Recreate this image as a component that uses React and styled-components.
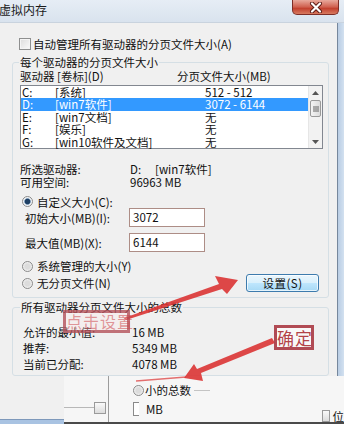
import React from 'react'
import styled, { createGlobalStyle } from 'styled-components'

const GlobalStyle = createGlobalStyle`
  html, body {
    margin: 0;
    padding: 0;
    background: #f0f0f0;
  }
  body {
    font-family: "Noto Sans CJK SC", "Liberation Sans", sans-serif;
    font-size: 11.5px;
    color: #111;
  }
`

const drives = [
    { letter: 'C:', label: '[系统]', size: '512 - 512' },
    { letter: 'D:', label: '[win7软件]', size: '3072 - 6144', selected: true },
    { letter: 'E:', label: '[win7文档]', size: '无' },
    { letter: 'F:', label: '[娱乐]', size: '无' },
    { letter: 'G:', label: '[win10软件及文档]', size: '无' },
]

const totals = [
    ['允许的最小值:', '16 MB'],
    ['推荐:', '5349 MB'],
    ['当前已分配:', '4078 MB'],
]

const App = () => {
    return (
        <Window>
            <GlobalStyle />
            <TitleBar>
                <Title>虚拟内存</Title>
                <CloseButton>
                    <svg width="14" height="11" viewBox="0 0 14 11">
                        <path d="M3 1.5 L11 9.5 M11 1.5 L3 9.5" stroke="#5a1a14" strokeWidth="4" strokeLinecap="round" />
                        <path d="M3 1.5 L11 9.5 M11 1.5 L3 9.5" stroke="#fff" strokeWidth="2.2" strokeLinecap="round" />
                    </svg>
                </CloseButton>
            </TitleBar>

            <Main>
                <Content>
                    <CheckRow>
                        <CheckBox />
                        <span>自动管理所有驱动器的分页文件大小(A)</span>
                    </CheckRow>

                    <GroupBox>
                        <GroupLegend>每个驱动器的分页文件大小</GroupLegend>
                        <ListHeader>
                            <span>驱动器 [卷标](D)</span>
                            <span>分页文件大小(MB)</span>
                        </ListHeader>
                        <ListBox>
                            <ListRows>
                                {drives.map((d) => (
                                    <ListRow key={d.letter} $selected={d.selected}>
                                        <span>{d.letter}</span>
                                        <span>{d.label}</span>
                                        <span>{d.size}</span>
                                    </ListRow>
                                ))}
                            </ListRows>
                            <ScrollBar>
                                <ScrollArrow>
                                    <svg width="7" height="4" viewBox="0 0 7 4"><path d="M0 4 L3.5 0 L7 4 Z" fill="#555" /></svg>
                                </ScrollArrow>
                                <ScrollThumb>
                                    <svg width="6" height="6" viewBox="0 0 6 6">
                                        <path d="M0 1 H6 M0 3 H6 M0 5 H6" stroke="#666" strokeWidth="1" />
                                    </svg>
                                </ScrollThumb>
                                <ScrollTrack />
                                <ScrollArrow>
                                    <svg width="7" height="4" viewBox="0 0 7 4"><path d="M0 0 L3.5 4 L7 0 Z" fill="#555" /></svg>
                                </ScrollArrow>
                            </ScrollBar>
                        </ListBox>

                        <InfoGrid>
                            <span>所选驱动器:</span>
                            <span><DriveTag>D:</DriveTag>[win7软件]</span>
                            <span>可用空间:</span>
                            <span>96963 MB</span>
                        </InfoGrid>

                        <RadioRow $top={6} $height={13}>
                            <Radio $checked />
                            <span>自定义大小(C):</span>
                        </RadioRow>
                        <SizeRow $top={0}>
                            <span>初始大小(MB)(I):</span>
                            <SizeInput>3072</SizeInput>
                        </SizeRow>
                        <SizeRow $top={6}>
                            <span>最大值(MB)(X):</span>
                            <SizeInput>6144</SizeInput>
                        </SizeRow>
                        <RadioRow $top={7} $height={14}>
                            <Radio />
                            <span>系统管理的大小(Y)</span>
                        </RadioRow>
                        <ActionRow>
                            <RadioRow $top={0} $height={18}>
                                <Radio />
                                <span>无分页文件(N)</span>
                            </RadioRow>
                            <PushButton>设置(S)</PushButton>
                        </ActionRow>
                    </GroupBox>

                    <TotalsBox>
                        <GroupLegend $shift={-3}>所有驱动器分页文件大小的总数</GroupLegend>
                        <TotalsGrid>
                            {totals.map(([k, v]) => (
                                <React.Fragment key={k}>
                                    <span>{k}</span>
                                    <span>{v}</span>
                                </React.Fragment>
                            ))}
                        </TotalsGrid>
                    </TotalsBox>
                </Content>
                <RightFrame />
            </Main>

            <Footer>
                <FooterStub />
                <Fragment>
                    <FragCell>
                        <FragLine />
                        <FragBox />
                    </FragCell>
                    <FragBody>
                        <FragRow $top={7}>
                            <Radio />
                            <span>小的总数</span>
                            <FragRule />
                        </FragRow>
                        <FragRow $top={5}>
                            <FragMini />
                            <span>MB</span>
                        </FragRow>
                    </FragBody>
                    <FragCorner>
                        <FragBox />
                        <span>位</span>
                    </FragCorner>
                </Fragment>
            </Footer>

            <Marks viewBox="0 0 344 424" width="344" height="424">
                <defs>
                    <filter id="soft" x="-10%" y="-10%" width="120%" height="120%">
                        <feGaussianBlur stdDeviation="0.6" />
                    </filter>
                </defs>
                <g fill="#dc3636" filter="url(#soft)" opacity="0.9">
                    <path d="M124 318 L219 284 L215 276 L238 280 L227 294 L222 289 L126 320 Z" />
                    <path d="M272 338 L275 343 L201 373 L203 381 L184 378 L194 364 L197 369 Z" />
                </g>
                <path d="M186 377 L136 381" stroke="#dc3636" strokeWidth="1.6" opacity="0.7" filter="url(#soft)" />
            </Marks>
            <Callout $left={63} $top={310} $w={67} $h={23} $size={16}>点击设置</Callout>
            <Callout $left={274} $top={325} $w={40} $h={25} $size={17} $solid>确定</Callout>
        </Window>
    )
}

const Window = styled.div`
    position: relative;
    width: 344px;
    height: 424px;
    overflow: hidden;
    display: flex;
    flex-direction: column;
    background: #f0f0f0;
`

const TitleBar = styled.div`
    flex: none;
    height: 23px;
    display: flex;
    align-items: flex-start;
    justify-content: space-between;
    background: linear-gradient(#e6edf5, #d9e3ee);
    border-bottom: 1px solid #c9d3de;
    box-sizing: border-box;
`

const Title = styled.div`
    margin-left: -1px;
    padding-top: 3px;
    font-size: 12px;
    line-height: 14px;
    color: #1a1a1a;
`

const CloseButton = styled.div`
    width: 47px;
    height: 15px;
    margin-right: 5px;
    box-sizing: border-box;
    display: flex;
    align-items: center;
    justify-content: center;
    border: 1px solid #7d2e27;
    border-top: none;
    border-radius: 0 0 5px 5px;
    background: linear-gradient(#e8a99c, #d0604f 50%, #c2412f 60%, #d77a5f);
`

const Main = styled.div`
    flex: none;
    height: 353px;
    display: flex;
`

const Content = styled.div`
    flex: 1;
    padding-top: 14px;
    background: #f0f0f0;
`

const RightFrame = styled.div`
    width: 6px;
    flex: none;
    background: linear-gradient(90deg, #b9cde4, #d3e1f0);
    border-left: 1px solid #76879c;
`

const CheckRow = styled.div`
    height: 14px;
    display: flex;
    align-items: center;
    gap: 2px;
    padding-left: 19px;
    line-height: 14px;
`

const CheckBox = styled.span`
    width: 12px;
    height: 12px;
    box-sizing: border-box;
    border: 1px solid #8e8f8f;
    background: linear-gradient(135deg, #dcdcdc, #fafafa);
    box-shadow: inset 0 0 0 1px #f4f4f4;
`

const GroupBox = styled.fieldset`
    margin: 4px 0 0 12px;
    width: 317px;
    box-sizing: border-box;
    border: 1px solid #d5dfe5;
    border-radius: 3px;
    padding: 0 4px 5px 7px;
    min-width: 0;
`

const GroupLegend = styled.legend`
    padding: 0 1px;
    margin-left: ${(p) => (p.$shift || -1)}px;
    line-height: 14px;
`

const ListHeader = styled.div`
    display: grid;
    grid-template-columns: 157px 1fr;
    height: 14px;
    line-height: 14px;
`

const ListBox = styled.div`
    margin-top: 2px;
    width: 303px;
    height: 64px;
    box-sizing: border-box;
    border: 1px solid #828790;
    background: #fff;
    display: flex;
`

const ListRows = styled.div`
    flex: 1;
    display: flex;
    flex-direction: column;
`

const ListRow = styled.div`
    display: grid;
    grid-template-columns: 33px 150px 1fr;
    height: 12.4px;
    line-height: 12.4px;
    padding-left: 1px;
    white-space: nowrap;
    background: ${(p) => (p.$selected ? '#3399ff' : 'transparent')};
    color: ${(p) => (p.$selected ? '#fff' : '#111')};
`

const ScrollBar = styled.div`
    width: 13px;
    display: flex;
    flex-direction: column;
    align-items: center;
    background: #f2f2f2;
    border-left: 1px solid #e6e6e6;
`

const ScrollArrow = styled.div`
    height: 13px;
    width: 100%;
    display: flex;
    align-items: center;
    justify-content: center;
`

const ScrollThumb = styled.div`
    margin-top: 1px;
    width: 11px;
    height: 17px;
    box-sizing: border-box;
    border: 1px solid #9a9a9a;
    border-radius: 2px;
    background: linear-gradient(90deg, #f4f4f4, #dcdcdc);
    display: flex;
    align-items: center;
    justify-content: center;
`

const ScrollTrack = styled.div`
    flex: 1;
`

const InfoGrid = styled.div`
    margin-top: 14px;
    display: grid;
    grid-template-columns: 110px 1fr;
    grid-auto-rows: 13px;
    line-height: 13px;
`

const DriveTag = styled.span`
    display: inline-block;
    width: 25px;
`

const RadioRow = styled.div`
    margin-top: ${(p) => p.$top}px;
    height: ${(p) => p.$height}px;
    display: flex;
    align-items: center;
    gap: 4px;
    padding-left: 2px;
    line-height: 14px;
`

const Radio = styled.span`
    width: 11px;
    height: 11px;
    flex: none;
    box-sizing: border-box;
    border-radius: 50%;
    border: 1px solid #8a8a8a;
    background: ${(p) =>
        p.$checked
            ? 'radial-gradient(circle, #1e3f63 0 2.4px, #7e9bb8 3px, #e9eef3 3.6px, #fdfdfd 5px)'
            : 'radial-gradient(circle, #dcdcdc 0 2.5px, #f7f7f7 5px)'};
`

const SizeRow = styled.div`
    margin-top: ${(p) => p.$top}px;
    height: 19px;
    display: grid;
    grid-template-columns: 104px 76px;
    align-items: center;
    padding-left: 5px;
    line-height: 14px;
`

const SizeInput = styled.div`
    height: 19px;
    box-sizing: border-box;
    border: 1px solid #ad8d86;
    background: #fff;
    padding-left: 3px;
    line-height: 17px;
`

const ActionRow = styled.div`
    margin-top: 1px;
    display: flex;
    align-items: center;
    justify-content: space-between;
    padding-right: 5px;
`

const PushButton = styled.div`
    width: 73px;
    height: 18px;
    box-sizing: border-box;
    border: 1px solid #3d7bad;
    border-radius: 3px;
    background: linear-gradient(#eaf6fd, #d9f0fc 50%, #bee6fd 51%, #a7d9f5);
    box-shadow: inset 0 0 0 1px rgba(255, 255, 255, 0.7);
    display: flex;
    align-items: center;
    justify-content: center;
    line-height: 14px;
    letter-spacing: 0.5px;
`

const TotalsBox = styled(GroupBox)`
    margin-top: 2px;
    padding: 10px 4px 3px 10px;
`

const TotalsGrid = styled.div`
    display: grid;
    grid-template-columns: 109px 1fr;
    grid-auto-rows: 16px;
    line-height: 16px;
`

const Footer = styled.div`
    flex: 1;
    display: flex;
`

const FooterStub = styled.div`
    width: 64px;
    background: #f0f0f0;
    border-bottom: 4px solid #a9c3e2;
    box-shadow: inset 0 -1px 0 #7d98ba;
`

const Fragment = styled.div`
    flex: 1;
    display: flex;
    background: #f6f6f6;
    border-bottom: 2px solid #4a4a4a;
`

const FragCell = styled.div`
    width: 44px;
    display: flex;
    align-items: flex-start;
    padding-top: 26px;
    border-right: 1px solid #9c9c9c;
`

const FragLine = styled.div`
    flex: 1;
    margin-top: 5px;
    border-top: 1px solid #b8b8b8;
`

const FragBox = styled.div`
    width: 10px;
    height: 10px;
    margin-right: 2px;
    border: 1px solid #9a9a9a;
    background: linear-gradient(#fafafa, #dcdcdc);
`

const FragBody = styled.div`
    flex: 1;
    padding-left: 24px;
    display: flex;
    flex-direction: column;
`

const FragRow = styled.div`
    margin-top: ${(p) => p.$top}px;
    height: 14px;
    display: flex;
    align-items: center;
    gap: 1px;
    line-height: 14px;
`

const FragRule = styled.div`
    width: 16px;
    margin-left: 2px;
    border-top: 1px solid #c4c4c4;
`

const FragMini = styled.div`
    width: 5px;
    height: 12px;
    margin-right: 6px;
    border: 1px solid #8a8a8a;
    border-right: none;
    background: #fff;
`

const FragCorner = styled.div`
    width: 22px;
    display: flex;
    align-items: flex-end;
    gap: 1px;
    line-height: 12px;
    overflow: hidden;
    white-space: nowrap;
`

const Marks = styled.svg`
    position: absolute;
    left: 0;
    top: 0;
    pointer-events: none;
`

const Callout = styled.div`
    position: absolute;
    left: ${(p) => p.$left}px;
    top: ${(p) => p.$top}px;
    width: ${(p) => p.$w}px;
    height: ${(p) => p.$h}px;
    box-sizing: border-box;
    border: 3px solid ${(p) => (p.$solid ? 'rgba(165, 45, 55, 0.85)' : 'rgba(170, 60, 70, 0.7)')};
    background: ${(p) => (p.$solid ? 'rgba(255, 255, 255, 0.55)' : 'rgba(255, 235, 235, 0.3)')};
    color: ${(p) => (p.$solid ? 'rgba(175, 55, 60, 0.95)' : 'rgba(205, 70, 75, 0.55)')};
    font-size: ${(p) => p.$size}px;
    line-height: ${(p) => p.$h - 6}px;
    text-align: center;
    white-space: nowrap;
    letter-spacing: 1px;
`

export default App
